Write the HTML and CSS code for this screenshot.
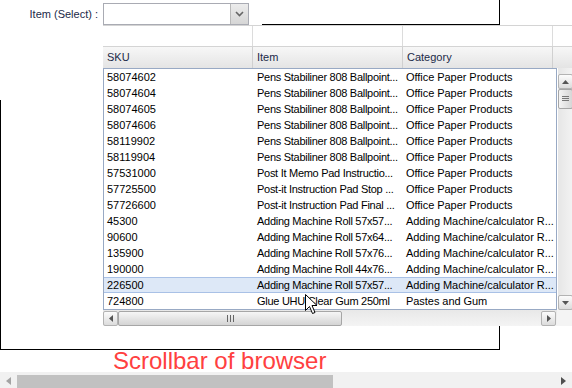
FILE: index.html
```html
<!DOCTYPE html>
<html>
<head>
<meta charset="utf-8">
<link rel="stylesheet" href="styles.css">
</head>
<body>
<div class="page">
  <div class="frame">
    <div class="form-row">
      <label class="label">Item (Select) :</label>
      <div class="combo">
        <div class="combo-trigger">
          <svg width="9" height="6" viewBox="0 0 9 6"><path d="M1 1 L4.5 4.5 L8 1" fill="none" stroke="#666" stroke-width="1.6"/></svg>
        </div>
      </div>
    </div>
    <div class="grid">
      <div class="filter-row">
        <div class="fcell"></div><div class="fcell"></div><div class="fcell"></div><div class="fcell rest"></div>
      </div>
      <div class="header-row">
        <div class="hcell">SKU</div><div class="hcell">Item</div><div class="hcell">Category</div><div class="hcell rest"></div>
      </div>
      <div class="grid-body">
        <div class="rows">
          <div class="row"><span>58074602</span><span>Pens Stabiliner 808 Ballpoint...</span><span>Office Paper Products</span></div>
          <div class="row"><span>58074604</span><span>Pens Stabiliner 808 Ballpoint...</span><span>Office Paper Products</span></div>
          <div class="row"><span>58074605</span><span>Pens Stabiliner 808 Ballpoint...</span><span>Office Paper Products</span></div>
          <div class="row"><span>58074606</span><span>Pens Stabiliner 808 Ballpoint...</span><span>Office Paper Products</span></div>
          <div class="row"><span>58119902</span><span>Pens Stabiliner 808 Ballpoint...</span><span>Office Paper Products</span></div>
          <div class="row"><span>58119904</span><span>Pens Stabiliner 808 Ballpoint...</span><span>Office Paper Products</span></div>
          <div class="row"><span>57531000</span><span>Post It Memo Pad Instructio...</span><span>Office Paper Products</span></div>
          <div class="row"><span>57725500</span><span>Post-it Instruction Pad Stop ...</span><span>Office Paper Products</span></div>
          <div class="row"><span>57726600</span><span>Post-it Instruction Pad Final ...</span><span>Office Paper Products</span></div>
          <div class="row"><span>45300</span><span>Adding Machine Roll 57x57...</span><span>Adding Machine/calculator R...</span></div>
          <div class="row"><span>90600</span><span>Adding Machine Roll 57x64...</span><span>Adding Machine/calculator R...</span></div>
          <div class="row"><span>135900</span><span>Adding Machine Roll 57x76...</span><span>Adding Machine/calculator R...</span></div>
          <div class="row"><span>190000</span><span>Adding Machine Roll 44x76...</span><span>Adding Machine/calculator R...</span></div>
          <div class="row sel"><span>226500</span><span>Adding Machine Roll 57x57...</span><span>Adding Machine/calculator R...</span></div>
          <div class="row"><span>724800</span><span>Glue UHU Clear Gum 250ml</span><span>Pastes and Gum</span></div>
        </div>
        <div class="vscroll">
          <div class="sbtn"><svg width="7" height="4" viewBox="0 0 7 4"><path d="M0 4 L3.5 0 L7 4 Z" fill="#555"/></svg></div>
          <div class="vthumb">
            <svg width="7" height="6" viewBox="0 0 7 6"><path d="M0 0.5 H7 M0 2.5 H7 M0 4.5 H7" stroke="#777" stroke-width="1"/></svg>
          </div>
          <div class="vtrack"></div>
          <div class="sbtn"><svg width="7" height="4" viewBox="0 0 7 4"><path d="M0 0 L3.5 4 L7 0 Z" fill="#555"/></svg></div>
        </div>
      </div>
      <div class="hscroll-row">
        <div class="hscroll">
          <div class="sbtn"><svg width="4" height="7" viewBox="0 0 4 7"><path d="M4 0 L0 3.5 L4 7 Z" fill="#555"/></svg></div>
          <div class="hthumb">
            <svg width="7" height="7" viewBox="0 0 7 7"><path d="M0.5 0 V7 M3.5 0 V7 M6.5 0 V7" stroke="#666" stroke-width="1"/></svg>
          </div>
          <div class="htrack"></div>
          <div class="sbtn"><svg width="4" height="7" viewBox="0 0 4 7"><path d="M0 0 L4 3.5 L0 7 Z" fill="#555"/></svg></div>
        </div>
        <div class="corner"></div>
      </div>
    </div>
    <svg class="cursor" width="13" height="21" viewBox="0 0 13 21"><path d="M0.5 0.5 L0.5 16.5 L4.5 12.5 L7.5 19.5 L10 18.5 L7 11.5 L12 11.5 Z" fill="#fff" stroke="#000" stroke-width="1" stroke-linejoin="round"/></svg>
  </div>
  <div class="note">Scrollbar of browser</div>
  <div class="bscroll">
    <div class="barrow"><svg width="5" height="8" viewBox="0 0 5 8"><path d="M5 0 L0 4 L5 8 Z" fill="#a3a3a3"/></svg></div>
    <div class="bthumb"></div>
    <div class="bspace"></div>
    <div class="barrow"><svg width="5" height="8" viewBox="0 0 5 8"><path d="M0 0 L5 4 L0 8 Z" fill="#505050"/></svg></div>
  </div>
</div>
</body>
</html>
```

FILE: styles.css
```css
html, body {
  margin: 0;
  padding: 0;
}
body {
  width: 572px;
  height: 388px;
  overflow: hidden;
  background: #fff;
  font-family: "Liberation Sans", Arial, sans-serif;
  font-size: 11px;
  color: #000;
}
.page {
  height: 388px;
  display: flex;
  flex-direction: column;
}
.frame {
  position: relative;
  flex: none;
  width: 500px;
  height: 350px;
  box-sizing: border-box;
  border-right: 1px solid #000;
  border-bottom: 1px solid #000;
}
.frame::before {
  content: "";
  position: absolute;
  left: 0;
  top: 100px;
  bottom: 0;
  width: 1px;
  background: #000;
}
.frame::after {
  content: "";
  position: absolute;
  left: 262px;
  right: 0;
  top: 24px;
  height: 1px;
  background: #000;
}
.form-row {
  display: flex;
  align-items: flex-start;
  height: 25px;
}
.label {
  width: 98px;
  margin-top: 8px;
  line-height: 13px;
  text-align: right;
  color: #1b2a48;
}
.combo {
  margin-left: 5px;
  margin-top: 3px;
  width: 146px;
  height: 22px;
  box-sizing: border-box;
  border: 1px solid #a9abb3;
  background: #fff;
  display: flex;
}
.combo-trigger {
  margin-left: auto;
  width: 17px;
  border-left: 1px solid #b9b9b9;
  background: linear-gradient(#ececec, #d6d6d6);
  display: flex;
  align-items: center;
  justify-content: center;
}
.grid {
  position: relative;
  z-index: 1;
  margin-left: 103px;
  width: 470px;
  border-top: 1px solid #d4d4d4;
  background: #fff;
}
.filter-row {
  display: flex;
  height: 20px;
  border-bottom: 1px solid #d4d4d4;
}
.fcell {
  flex: none;
  width: 150px;
  box-sizing: border-box;
  border-right: 1px solid #dcdcdc;
}
.fcell.rest, .hcell.rest {
  flex: 1;
  border-right: none;
}
.header-row {
  display: flex;
  height: 21px;
  background: linear-gradient(#f7f7f7, #e4e4e4);
}
.hcell {
  flex: none;
  width: 150px;
  box-sizing: border-box;
  border-right: 1px solid #d0d0d0;
  padding-left: 4px;
  line-height: 21px;
  color: #1b2a48;
}
.grid-body {
  display: flex;
  height: 242px;
}
.rows {
  flex: none;
  width: 454px;
  box-sizing: border-box;
  border: 1px solid #98a9c4;
  overflow: hidden;
}
.row {
  display: grid;
  grid-template-columns: 150px 150px 150px;
  height: 16px;
  line-height: 16px;
}
.row span {
  padding: 0 0 0 3px;
  white-space: nowrap;
}
.row span:nth-child(2) {
  letter-spacing: -0.28px;
}
.row span:nth-child(3) {
  padding-left: 2px;
  letter-spacing: -0.05px;
}
.row.sel {
  background: #dde8f7;
  box-shadow: inset 0 1px #a9c1e6, inset 0 -1px #a9c1e6;
}
.vscroll {
  flex: none;
  width: 16px;
  margin-left: 1px;
  display: flex;
  flex-direction: column;
  background: linear-gradient(90deg, #e6e6e6, #f4f4f4);
  padding: 6px 0 0 0;
  box-sizing: border-box;
}
.sbtn {
  flex: none;
  width: 15px;
  height: 15px;
  box-sizing: border-box;
  border: 1px solid #b3b3b3;
  border-radius: 2px;
  background: linear-gradient(#fcfcfc, #dcdcdc);
  display: flex;
  align-items: center;
  justify-content: center;
}
.vthumb {
  flex: none;
  height: 20px;
  width: 15px;
  box-sizing: border-box;
  border: 1px solid #a6a6a6;
  border-radius: 2px;
  background: linear-gradient(90deg, #f4f4f4, #d6d6d6);
  display: flex;
  align-items: center;
  justify-content: center;
}
.vtrack {
  flex: 1;
}
.hscroll-row {
  display: flex;
  height: 16px;
}
.hscroll {
  flex: none;
  width: 454px;
  display: flex;
  align-items: center;
  background: linear-gradient(#e8e8e8, #f4f4f4);
  padding-right: 1px;
  box-sizing: border-box;
}
.hthumb {
  flex: none;
  width: 224px;
  height: 15px;
  box-sizing: border-box;
  border: 1px solid #a6a6a6;
  border-radius: 2px;
  background: linear-gradient(#f6f6f6, #d4d4d4);
  display: flex;
  align-items: center;
  justify-content: center;
}
.htrack {
  flex: 1;
}
.corner {
  flex: 1;
  background: #f4f4f4;
}
.cursor {
  position: absolute;
  left: 305px;
  top: 294px;
  z-index: 2;
}
.note {
  flex: none;
  margin-left: 113px;
  font-size: 24px;
  line-height: 22px;
  color: #ff4040;
}
.bscroll {
  margin-top: auto;
  flex: none;
  height: 18px;
  background: #f1f1f1;
  display: flex;
  align-items: center;
}
.barrow {
  flex: none;
  width: 17px;
  height: 18px;
  display: flex;
  align-items: center;
  justify-content: center;
}
.bthumb {
  flex: none;
  width: 316px;
  height: 13px;
  background: #c1c1c1;
}
.bspace {
  flex: 1;
}
```
